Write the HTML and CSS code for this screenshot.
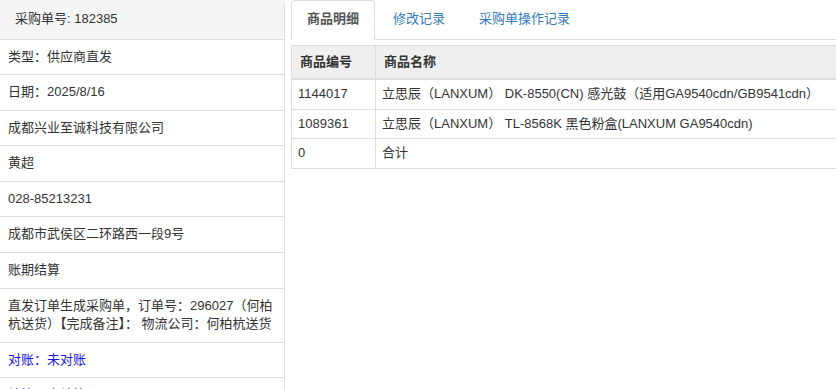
FILE: index.html
```html
<!DOCTYPE html>
<html lang="zh-CN">
<head>
<meta charset="utf-8">
<title>采购单 182385</title>
<link rel="stylesheet" href="styles.css">
</head>
<body>
<div class="page">
  <aside class="info-panel">
    <div class="info-head">采购单号: 182385</div>
    <ul class="info-list">
      <li>类型：供应商直发</li>
      <li>日期：2025/8/16</li>
      <li>成都兴业至诚科技有限公司</li>
      <li>黄超</li>
      <li>028-85213231</li>
      <li>成都市武侯区二环路西一段9号</li>
      <li>账期结算</li>
      <li>直发订单生成采购单，订单号：296027（何柏杭送货）【完成备注】： 物流公司：何柏杭送货</li>
      <li class="link">对账：未对账</li>
      <li class="link">结算：未结算</li>
    </ul>
  </aside>
  <main class="detail">
    <ul class="tabs">
      <li class="tab active">商品明细</li>
      <li class="tab">修改记录</li>
      <li class="tab">采购单操作记录</li>
    </ul>
    <table class="goods">
      <thead>
        <tr><th class="code">商品编号</th><th>商品名称</th></tr>
      </thead>
      <tbody>
        <tr><td>1144017</td><td>立思辰（LANXUM） DK-8550(CN) 感光鼓（适用GA9540cdn/GB9541cdn）</td></tr>
        <tr><td>1089361</td><td>立思辰（LANXUM） TL-8568K 黑色粉盒(LANXUM GA9540cdn)</td></tr>
        <tr><td>0</td><td>合计</td></tr>
      </tbody>
    </table>
  </main>
</div>
</body>
</html>
```
FILE: styles.css
```css
html {
  overflow: hidden;
}
body {
  margin: 0;
  font-family: "Liberation Sans", "Noto Sans CJK SC", sans-serif;
  font-size: 13px;
  line-height: 1.42857;
  color: #333;
  background: #fff;
}
.page {
  display: flex;
  gap: 6px;
  width: 1200px;
  align-items: flex-start;
}
.info-panel {
  flex: none;
  width: 284px;
  border-right: 1px solid #ddd;
  border-top-right-radius: 4px;
}
.info-head {
  background: #f5f5f5;
  padding: 10px 15px;
  border-top-right-radius: 4px;
}
.info-list {
  list-style: none;
  margin: 0;
  padding: 0;
}
.info-list li {
  padding: 8px;
  border-top: 1px solid #ddd;
}
.info-list li.link {
  color: #1515e0;
}
.detail {
  flex: 1;
}
.tabs {
  display: flex;
  list-style: none;
  margin: 0;
  padding: 0;
  border-bottom: 1px solid #ddd;
}
.tab {
  margin-right: 2px;
  margin-bottom: -1px;
  padding: 9px 15px 10px;
  border: 1px solid transparent;
  border-radius: 4px 4px 0 0;
  color: #337ab7;
}
.tab.active {
  color: #555;
  font-weight: bold;
  background: #fff;
  border-color: #ddd;
  border-bottom-color: transparent;
}
.goods {
  margin-top: 5px;
  width: 100%;
  border-collapse: collapse;
  border: 1px solid #ddd;
}
.goods th {
  background: #efefef;
  text-align: left;
  font-weight: bold;
  padding: 7px 8px;
  border: 1px solid #ddd;
  border-bottom-width: 2px;
}
.goods th.code {
  width: 67px;
}
.goods td {
  padding: 5px 6px;
  border: 1px solid #ddd;
}
```
